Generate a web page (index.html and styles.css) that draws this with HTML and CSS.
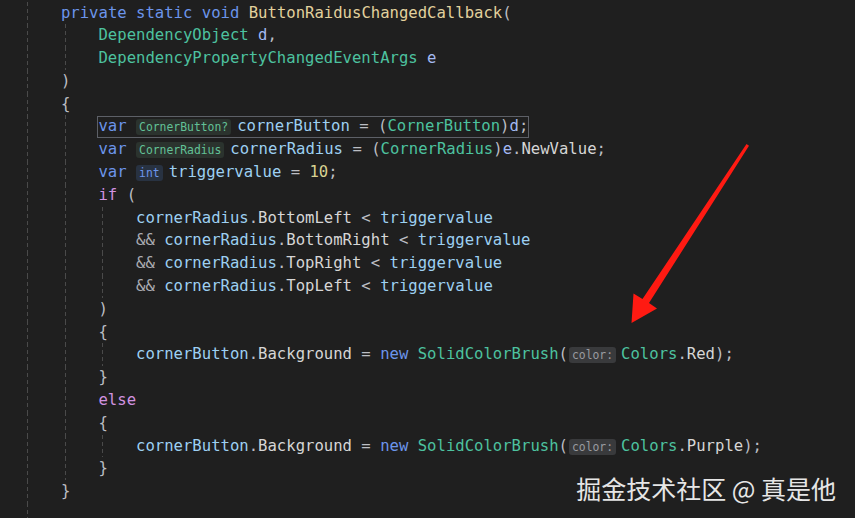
FILE: index.html
```html
<!DOCTYPE html>
<html lang="en">
<head>
<meta charset="utf-8">
<title>Editor</title>
<link rel="stylesheet" href="styles.css">
</head>
<body>
<div class="editor">
  <div class="code">
    <div class="ln"><i class="g"></i><span class="t"><span class="kw">private static void</span> <span class="fn">ButtonRaidusChangedCallback</span>(</span></div>
    <div class="ln"><i class="g"></i><i class="g"></i><span class="t"><span class="ty">DependencyObject</span> <span class="pa">d</span>,</span></div>
    <div class="ln"><i class="g"></i><i class="g"></i><span class="t"><span class="ty">DependencyPropertyChangedEventArgs</span> <span class="pa">e</span></span></div>
    <div class="ln"><i class="g"></i><span class="t">)</span></div>
    <div class="ln"><i class="g"></i><span class="t">{</span></div>
    <div class="ln"><i class="g"></i><i class="g"></i><span class="t sel"><span class="kw">var</span> <span class="hint h-ty">CornerButton?</span><span class="lv">cornerButton</span> = (<span class="ty">CornerButton</span>)<span class="pa">d</span>;</span></div>
    <div class="ln"><i class="g"></i><i class="g"></i><span class="t"><span class="kw">var</span> <span class="hint h-ty">CornerRadius</span><span class="lv">cornerRadius</span> = (<span class="ty">CornerRadius</span>)<span class="pa">e</span>.<span class="pr">NewValue</span>;</span></div>
    <div class="ln"><i class="g"></i><i class="g"></i><span class="t"><span class="kw">var</span> <span class="hint h-kw">int</span><span class="lv">triggervalue</span> = <span class="num">10</span>;</span></div>
    <div class="ln"><i class="g"></i><i class="g"></i><span class="t"><span class="ctl">if</span> (</span></div>
    <div class="ln"><i class="g"></i><i class="g"></i><i class="g"></i><span class="t"><span class="lv">cornerRadius</span>.<span class="pr">BottomLeft</span> &lt; <span class="lv">triggervalue</span></span></div>
    <div class="ln"><i class="g"></i><i class="g"></i><i class="g"></i><span class="t"><span class="amp">&amp;&amp;</span> <span class="lv">cornerRadius</span>.<span class="pr">BottomRight</span> &lt; <span class="lv">triggervalue</span></span></div>
    <div class="ln"><i class="g"></i><i class="g"></i><i class="g"></i><span class="t"><span class="amp">&amp;&amp;</span> <span class="lv">cornerRadius</span>.<span class="pr">TopRight</span> &lt; <span class="lv">triggervalue</span></span></div>
    <div class="ln"><i class="g"></i><i class="g"></i><i class="g"></i><span class="t"><span class="amp">&amp;&amp;</span> <span class="lv">cornerRadius</span>.<span class="pr">TopLeft</span> &lt; <span class="lv">triggervalue</span></span></div>
    <div class="ln"><i class="g"></i><i class="g"></i><span class="t">)</span></div>
    <div class="ln"><i class="g"></i><i class="g"></i><span class="t">{</span></div>
    <div class="ln"><i class="g"></i><i class="g"></i><i class="g"></i><span class="t"><span class="lv">cornerButton</span>.<span class="pr">Background</span> = <span class="kw">new</span> <span class="ty">SolidColorBrush</span>(<span class="hint h-par">color:</span><span class="ty">Colors</span>.<span class="pr">Red</span>);</span></div>
    <div class="ln"><i class="g"></i><i class="g"></i><span class="t">}</span></div>
    <div class="ln"><i class="g"></i><i class="g"></i><span class="t"><span class="ctl">else</span></span></div>
    <div class="ln"><i class="g"></i><i class="g"></i><span class="t">{</span></div>
    <div class="ln"><i class="g"></i><i class="g"></i><i class="g"></i><span class="t"><span class="lv">cornerButton</span>.<span class="pr">Background</span> = <span class="kw">new</span> <span class="ty">SolidColorBrush</span>(<span class="hint h-par">color:</span><span class="ty">Colors</span>.<span class="pr">Purple</span>);</span></div>
    <div class="ln"><i class="g"></i><i class="g"></i><span class="t">}</span></div>
    <div class="ln"><i class="g"></i><span class="t">}</span></div>
    <div class="ln"><i class="g"></i><span class="t"></span></div>
  </div>

  <svg class="arrow" width="855" height="518" viewBox="0 0 855 518" aria-hidden="true">
    <polygon points="746.5,144 749,145.8 649,303 657,308.5 631.5,323 633.5,293.5 642.5,299" fill="#ff1a12"/>
  </svg>

  <div class="wm">掘金技术社区 @ 真是他</div>
</div>
</body>
</html>
```

FILE: styles.css
```css
html, body {
  margin: 0;
  padding: 0;
  background: #1f1f1f;
}

.editor {
  position: relative;
  width: 855px;
  height: 518px;
  overflow: hidden;
  background: #1f1f1f;
}

.code {
  display: flex;
  flex-direction: column;
  padding-left: 23.4px;
  margin-top: 1.5px;
  font-family: "DejaVu Sans Mono", "Liberation Mono", monospace;
  font-size: 15.6px;
  color: #bcbec4;
}

.ln {
  display: flex;
  align-items: stretch;
  flex: 0 0 22.8px;
  height: 22.8px;
  line-height: 22.8px;
  white-space: pre;
}

.g {
  flex: 0 0 4ch;
  width: 4ch;
  background-image: repeating-linear-gradient(to bottom, #4a4a4a 0 4px, transparent 4px 7px);
  background-size: 1px 100%;
  background-position: 4px 0;
  background-repeat: no-repeat;
}

.t {
  display: inline-block;
  white-space: pre;
}

.sel {
  position: relative;
}

.sel::after {
  content: "";
  position: absolute;
  left: -1px;
  right: -1px;
  top: 1px;
  bottom: 0;
  border: 1px solid #5d6067;
}

.kw { color: #6c95eb; }
.ctl { color: #d192e0; }
.fn { color: #e2d19d; }
.ty { color: #4dc29f; }
.pa { color: #a3b9f2; }
.lv { color: #9dd0f2; }
.pr { color: #d6d6d6; }
.num { color: #d8d291; }
.amp { color: #a9aab0; }

.hint {
  display: inline-block;
  font-family: "DejaVu Sans Mono", monospace;
  font-size: 11.4px;
  line-height: 16px;
  padding: 0 3px;
  border-radius: 3px;
  margin-right: 6px;
}

.h-ty {
  color: #62c196;
  background: #2b332e;
}

.h-kw {
  color: #6c95eb;
  background: #283241;
}

.h-par {
  color: #9a9ca0;
  background: #393a3c;
  margin-left: 1px;
  margin-right: 5px;
}

.arrow {
  position: absolute;
  left: 0;
  top: 0;
  pointer-events: none;
}

.wm {
  position: absolute;
  right: 19px;
  top: 473px;
  font-family: "Noto Sans CJK SC", "Noto Sans", sans-serif;
  font-size: 25px;
  line-height: 30px;
  color: #e6e6e6;
  white-space: pre;
}
```
